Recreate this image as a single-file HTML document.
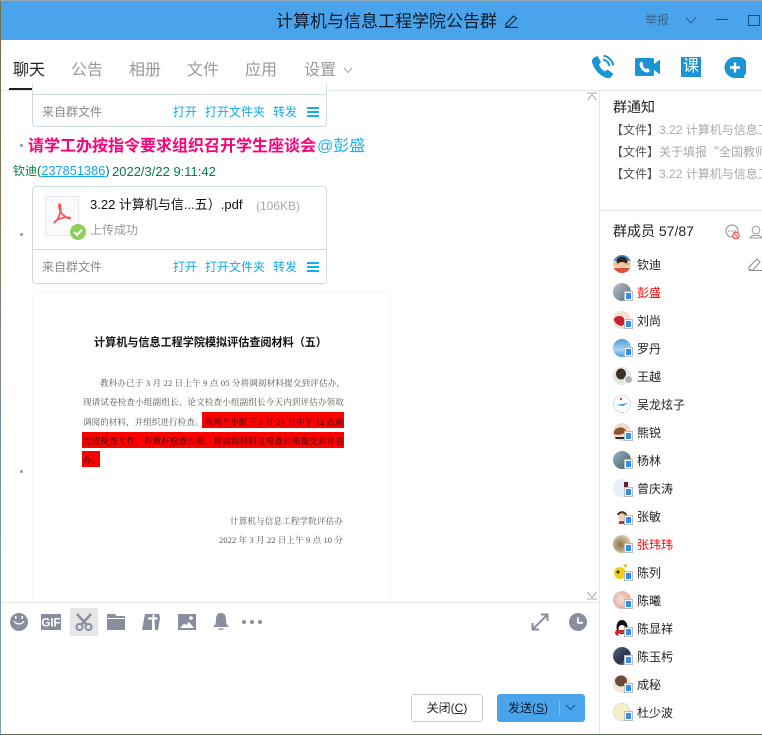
<!DOCTYPE html>
<html lang="zh"><head><meta charset="utf-8"><title>计算机与信息工程学院公告群</title>
<style>
html,body{margin:0;padding:0}
body{width:762px;height:735px;position:relative;overflow:hidden;background:#fff;font-family:"Liberation Sans","Noto Sans CJK SC",sans-serif;color:#222}
.t{position:absolute;white-space:nowrap;line-height:1}
.a{position:absolute}
.tab{font-size:16px;color:#999;top:63px}
.link{font-size:12px;color:#12a8ee}
.card{position:absolute;left:32px;width:293px;border:1px solid #cddbe5;border-radius:4px;background:#fff}
.menu{position:absolute;left:307px;width:12px;height:10px;box-sizing:border-box;border-top:2px solid #12aef0;border-bottom:2px solid #12aef0}
.menu:after{content:"";position:absolute;left:0;right:0;top:2px;height:2px;background:#12aef0}
.dot{position:absolute;left:20px;width:3px;height:3px;border-radius:50%;background:#8c9aa8}
.doc{position:absolute;font-family:"Liberation Serif","Noto Serif CJK SC",serif;font-size:8.5px;color:#555;left:83px;width:261px;line-height:12px;height:12px;text-align:justify;text-align-last:justify;white-space:nowrap;letter-spacing:.1px;filter:blur(.25px)}
.red{position:absolute;background:#fe0000}
.note{position:absolute;left:611px;width:151px;overflow:hidden;white-space:nowrap;font-size:12px;line-height:14px;color:#aaa}
.note b{font-weight:400;color:#555}
.name{position:absolute;left:637px;font-size:12px;line-height:14px;color:#222;white-space:nowrap}
.av{position:absolute;left:613px;width:18px;height:18px;border-radius:50%;overflow:hidden}
.ph{position:absolute;left:625px;width:5px;height:6px;background:#2d8ff0;border:1px solid #fff;outline:1px solid #bbb;outline-offset:0}
</style></head>
<body>
<!-- desktop edges -->
<div class="a" style="left:0;top:0;width:1px;height:735px;background:linear-gradient(#6f6a45,#8a7a50 30%,#6f8fa8 60%,#7fa0b8)"></div>
<div class="a" style="left:0;top:734px;width:762px;height:1px;background:#5f6f55"></div>
<div class="a" style="left:0;top:0;width:762px;height:1px;background:#8fa6b5"></div>
<!-- title bar -->
<div class="a" style="left:1px;top:1px;width:761px;height:39px;background:#4aa4ec"></div>
<div class="t" style="left:276px;top:13px;font-size:17px;color:#0b1a28">计算机与信息工程学院公告群</div>
<svg class="a" style="left:504px;top:14px" width="15" height="14" viewBox="0 0 15 14" fill="none" stroke="#12283a" stroke-width="1.1"><path d="M2 10 L9.5 2 L12.5 4.5 L5 12 L1.8 12.5 Z M1 13.4 H14"/></svg>
<div class="t" style="left:645px;top:14px;font-size:12px;color:#336791">举报</div>
<svg class="a" style="left:685px;top:16px" width="12" height="9" fill="none" stroke="#2f628c"><path d="M1 1.5 L6 7 L11 1.5"/></svg>
<div class="a" style="left:716px;top:19px;width:12px;height:1px;background:#1f4f78"></div>
<div class="a" style="left:748px;top:15px;width:10px;height:9px;border:1px solid #1f4f78"></div>
<!-- tabs -->
<div class="t tab" style="left:13px;color:#222">聊天</div>
<div class="t tab" style="left:71px">公告</div>
<div class="t tab" style="left:129px">相册</div>
<div class="t tab" style="left:187px">文件</div>
<div class="t tab" style="left:245px">应用</div>
<div class="t tab" style="left:304px">设置</div>
<svg class="a" style="left:343px;top:67px" width="10" height="7" fill="none" stroke="#aaa"><path d="M1 1 L5 5.5 L9 1"/></svg>
<div class="a" style="left:9px;top:88px;width:41px;height:2px;background:#222"></div>
<div class="a" style="left:1px;top:90px;width:761px;height:1px;background:#e5e8ea"></div>
<!-- top right icons -->
<svg class="a" style="left:591px;top:55px" width="24" height="24" viewBox="0 0 24 24"><path d="M3 2.5 L6.5 1 L10 7 L8 9.5 C9 12.5 11 15 14 16.5 L16.5 14.5 L22.5 19 L20 22 C19 23.5 16.500 23.500 14 22.500 C7 19.500 2 12 1 7 C.8 5 1.500 3.500 3 2.500Z" fill="#1a94d4"/><path d="M12 4.500C15 5 18 7.500 18.500 11M12.500 .8C17.500 1.500 21.500 5.500 22.300 10.500" fill="none" stroke="#1a94d4" stroke-width="2"/></svg>
<svg class="a" style="left:635px;top:58px" width="25" height="18" viewBox="0 0 25 18"><rect x="0" y="0" width="19" height="18" rx="1.500" fill="#1a94d4"/><path d="M19 6 L25 1.500 V16.500 L19 12Z" fill="#1a94d4"/><path d="M6 3.500 L8 5 L8 8 C8.500 9.500 9.500 10.500 11 11 L13 10 L15 13 L13 14.500 C9 15 5 10.500 4.500 6 Z" fill="#fff"/></svg>
<div class="a" style="left:681px;top:57px;width:20px;height:20px;background:#1a94d4;color:#fff;font-size:16px;line-height:20px;text-align:center">课</div>
<svg class="a" style="left:724px;top:57px" width="22" height="22" viewBox="0 0 22 22"><path d="M11 0A10.500 10.500 0 1 0 11 21H20.500L20 18.500A10.500 10.500 0 0 0 11 0Z" fill="#1a94d4"/><path d="M11 5.500V15.500M6 10.500H16" stroke="#fff" stroke-width="2.400"/></svg>
<!-- chat: first card -->
<div class="card" style="top:84px;height:42px;border-top:0;border-radius:0 0 4px 4px"></div>
<div class="a" style="left:33px;top:94px;width:293px;height:1px;background:#cddbe5"></div>
<div class="t" style="left:42px;top:106px;font-size:12px;color:#888">来自群文件</div>
<div class="t link" style="left:173px;top:106px">打开</div>
<div class="t link" style="left:205px;top:106px">打开文件夹</div>
<div class="t link" style="left:273px;top:106px">转发</div>
<div class="menu" style="top:107px"></div>
<!-- message -->
<div class="dot" style="top:144px"></div>
<div class="t" style="left:28px;top:139px;font-size:16px;font-weight:700;color:#ff0078">请学工办按指令要求组织召开学生座谈会</div>
<div class="t" style="left:317px;top:139px;font-size:16px;color:#1cb0f0">@彭盛</div>
<div class="t" style="left:13px;top:165px;font-size:12px;color:#008040">钦迪</div>
<div class="t" style="left:37px;top:165px;font-size:12.800px;color:#008040">(<span style="color:#12a8ee;text-decoration:underline">237851386</span>)</div>
<div class="t" style="left:112px;top:165px;font-size:13px;color:#008040">2022/3/22 9:11:42</div>
<!-- second card -->
<div class="card" style="top:186px;height:96px"></div>
<div class="a" style="left:33px;top:249px;width:293px;height:1px;background:#cddbe5"></div>
<div class="a" style="left:45px;top:196px;width:32px;height:38px;background:#fafafa;border:1px solid #e8e8e8"></div>
<svg class="a" style="left:52px;top:203px" width="20" height="24" viewBox="0 0 20 24" fill="none" stroke="#f45a5a" stroke-width="1.800"><path d="M2 20 C6 17 9 11 8.500 2.500 C8 0 6.500 1 7 4 C8 10 13 15 18 15.500 C19 14.500 14 13.500 10 15 C7 16 3 18 2 20Z"/></svg>
<div class="a" style="left:70px;top:224px;width:16px;height:16px;border-radius:50%;background:#8ccf5c"></div>
<svg class="a" style="left:70px;top:224px" width="16" height="16" fill="none" stroke="#fff" stroke-width="2"><path d="M4 8 L7 11 L12 5.500"/></svg>
<div class="t" style="left:90px;top:198px;font-size:13px;color:#111">3.22 计算机与信...五）.pdf</div>
<div class="t" style="left:256px;top:200px;font-size:12px;color:#aaa">(106KB)</div>
<div class="t" style="left:90px;top:224px;font-size:12px;color:#999">上传成功</div>
<div class="t" style="left:42px;top:261px;font-size:12px;color:#888">来自群文件</div>
<div class="t link" style="left:173px;top:261px">打开</div>
<div class="t link" style="left:205px;top:261px">打开文件夹</div>
<div class="t link" style="left:273px;top:261px">转发</div>
<div class="menu" style="top:262px"></div>
<div class="dot" style="top:233px"></div>
<!-- image -->
<div class="a" style="left:32px;top:292px;width:357px;height:310px;border:1px solid #f6f6f6;border-bottom:0;border-radius:4px 4px 0 0;box-sizing:border-box;width:359px"></div>
<div class="dot" style="top:470px"></div>
<div class="red" style="left:202px;top:412px;width:142px;height:16px"></div>
<div class="red" style="left:82px;top:432px;width:262px;height:16px"></div>
<div class="red" style="left:82px;top:451px;width:18px;height:16px"></div>
<div class="t" style="left:94px;top:338px;font-size:11.100px;font-weight:700;color:#111;font-family:'Liberation Sans','Noto Sans CJK SC',sans-serif">计算机与信息工程学院模拟评估查阅材料（五）</div>
<div class="doc" style="top:377px;left:100px;width:245px">教科办已于 3 月 22 日上午 9 点 05 分将调阅材料提交到评估办，</div>
<div class="doc" style="top:396px">现请试卷检查小组副组长、论文检查小组副组长今天内到评估办领取</div>
<div class="doc" style="top:416px;width:115px">调阅的材料，并组织进行检查。</div>
<div class="doc" style="top:416px;left:204px;width:140px;color:#200">请两个小组于 3 月 24 日中午 12 点前</div>
<div class="doc" style="top:435px;color:#200">完成检查工作，并做好检查台账，将调阅材料及检查台账提交到评估</div>
<div class="doc" style="top:454px;width:16px;color:#200;text-align-last:left;letter-spacing:0">办。</div>
<div class="doc" style="top:515px;left:230px;width:113px">计算机与信息工程学院评估办</div>
<div class="doc" style="top:534px;left:219px;width:124px">2022 年 3 月 22 日上午 9 点 10 分</div>
<!-- scroll arrows -->
<svg class="a" style="left:586px;top:92px" width="12" height="9" fill="none" stroke="#aaa"><path d="M1 1H11M1.500 8 L6 2.500 L10.500 8"/></svg>
<svg class="a" style="left:586px;top:591px" width="12" height="9" fill="none" stroke="#aaa"><path d="M1 8H11M1.500 1 L6 6.500 L10.500 1"/></svg>
<!-- input area -->
<div class="a" style="left:1px;top:602px;width:598px;height:1px;background:#e5e8ea"></div>
<div class="a" style="left:70px;top:608px;width:28px;height:28px;background:#e6e6e6;border-radius:2px"></div>
<svg class="a" style="left:0;top:605px" width="270" height="34" fill="#8a8d9e">
<circle cx="19" cy="17" r="9"/><path d="M14 16a5.500 5 0 0 0 10 0" fill="none" stroke="#fff" stroke-width="1.300"/><rect x="15" y="11" width="1.500" height="3" fill="#fff"/><rect x="21.500" y="11" width="1.500" height="3" fill="#fff"/>
<rect x="41" y="9" width="20" height="16"/><text x="51" y="21.500" font-family="Liberation Sans" font-weight="700" font-size="11.500" fill="#fff" text-anchor="middle">GIF</text>
<path d="M77 9 L87 20 M91 9 L81 20" stroke="#8a8d9e" stroke-width="2.500" fill="none"/><circle cx="79.500" cy="22" r="3" fill="none" stroke="#8a8d9e" stroke-width="2"/><circle cx="88.500" cy="22" r="3" fill="none" stroke="#8a8d9e" stroke-width="2"/>
<path d="M107 9H115L116.500 11H125V13H107ZM107 14H125V25H107Z"/>
<path d="M145 9H159L160 13L158 25H142L144 14Z"/><path d="M152.500 9.500H154.500V12.500H157.500V14.500H154.500L155 25H152L152 14.500H148V12.500H152.500Z" fill="#fff"/>
<path d="M178 9H196V25H178ZM180 23H194L189 17L186 20L184 18.500Z" fill-rule="evenodd"/><circle cx="191" cy="13" r="1.800" fill="#fff"/>
<path d="M221 8C225 8 226 11 226 15C226 19 227 20 229 22H213C215 20 216 19 216 15C216 11 217 8 221 8ZM218 23.500H224C223.500 25.500 218.500 25.500 218 23.500Z"/>
<circle cx="244" cy="17" r="2"/><circle cx="252" cy="17" r="2"/><circle cx="260" cy="17" r="2"/>
</svg>
<svg class="a" style="left:530px;top:612px" width="20" height="20" fill="none" stroke="#8a8d9e" stroke-width="2"><path d="M3 17 L17 3M11 2.500H17.500V9M2.500 11V17.500H9"/></svg>
<svg class="a" style="left:569px;top:613px" width="18" height="18"><circle cx="9" cy="9" r="9" fill="#8a8d9e"/><path d="M9 4.500V9.800H14" fill="none" stroke="#fff" stroke-width="1.800"/></svg>
<!-- buttons -->
<div class="a" style="left:411px;top:694px;width:70px;height:26px;border:1px solid #ccc;border-radius:3px;font-size:12px;line-height:26px;text-align:center;color:#222">关闭(<u>C</u>)</div>
<div class="a" style="left:497px;top:694px;width:88px;height:28px;background:#4aa4ec;border-radius:3px"></div>
<div class="t" style="left:508px;top:702px;font-size:12px;color:#0b1a28">发送(<u>S</u>)</div>
<div class="a" style="left:559px;top:700px;width:1px;height:16px;background:#7cbdf0"></div>
<svg class="a" style="left:565px;top:704px" width="11" height="8" fill="none" stroke="#1f4f78"><path d="M1 1 L5.500 5.500 L10 1"/></svg>
<!-- sidebar -->
<div class="a" style="left:599px;top:90px;width:1px;height:644px;background:#e5e8ea"></div>
<div class="t" style="left:613px;top:100px;font-size:14px;color:#222">群通知</div>
<div class="note" style="top:123px"><b>【文件】</b>3.22 计算机与信息工程学院</div>
<div class="note" style="top:145px"><b>【文件】</b>关于填报<span style="font-family:'Noto Sans CJK SC',sans-serif">“</span>全国教师管理</div>
<div class="note" style="top:167px"><b>【文件】</b>3.22 计算机与信息工程学院</div>
<div class="a" style="left:600px;top:210px;width:162px;height:1px;background:#e5e8ea"></div>
<div class="t" style="left:613px;top:224px;font-size:14px;color:#222">群成员 57/87</div>
<svg class="a" style="left:724px;top:224px" width="38" height="17" fill="none"><circle cx="8" cy="7" r="6" stroke="#888"/><circle cx="5" cy="7" r=".8" fill="#888"/><circle cx="8" cy="7" r=".8" fill="#888"/><circle cx="11" cy="7" r=".8" fill="#888"/><circle cx="12" cy="11.500" r="3.200" fill="#fff" stroke="#f55" stroke-width="1.300"/><path d="M10 9.500L14 13.500" stroke="#f55"/><circle cx="32" cy="6" r="3.800" stroke="#999"/><path d="M26 14C27 10.500 37 10.500 38 14Z" stroke="#999"/></svg>
<svg class="a" style="left:748px;top:257px" width="14" height="15" fill="none" stroke="#888"><path d="M1 10 L9 2 L12 5 L5 13 H1Z M1 13.500H14"/></svg>

<div class="av" style="top:255px;background:#f8d8b8"><svg width="18" height="18"><rect width="18" height="6" fill="#3a8fd0"/><rect y="13" width="18" height="5" fill="#d85040"/><circle cx="9" cy="7" r="5.500" fill="#3a2418"/><ellipse cx="9" cy="10" rx="4.500" ry="3" fill="#f0c8a0"/><circle cx="3" cy="9" r="1.800" fill="#e8b888"/><circle cx="15" cy="9" r="1.800" fill="#e8b888"/></svg></div>
<div class="name" style="top:258px">钦迪</div>

<div class="av" style="top:283px;background:linear-gradient(135deg,#b8c0c8,#5f6f7f)"></div><div class="ph" style="top:292px"></div>
<div class="name" style="top:286px;color:#f00">彭盛</div>

<div class="av" style="top:311px;background:#f3e0cc"><svg width="18" height="18"><path d="M1 8C3 4 10 4 11 8C14 9 12 14 8 15C5 14 1 12 1 8Z" fill="#c8202c"/></svg></div><div class="ph" style="top:320px"></div>
<div class="name" style="top:314px">刘尚</div>

<div class="av" style="top:339px;background:linear-gradient(#4a9be0,#a8d4f0 60%,#4a9be0)"></div><div class="ph" style="top:348px"></div>
<div class="name" style="top:342px">罗丹</div>

<div class="av" style="top:367px;background:#e4e6e2"><svg width="18" height="18"><ellipse cx="8" cy="7" rx="5" ry="5.500" fill="#3a3028"/></svg></div><div class="a" style="left:624px;top:375px;width:7px;height:7px;border-radius:50%;background:#b5b5b5;border:1px solid #fff"></div>
<div class="name" style="top:370px">王越</div>

<div class="av" style="top:395px;background:#fff;border:1px dotted #8fc8d8;box-sizing:border-box"><svg width="16" height="16"><path d="M2 9L14 7L9 10Z" fill="#2aa0e0"/><circle cx="7" cy="3" r="1.200" fill="#d04040"/></svg></div>
<div class="name" style="top:398px">吴龙炫子</div>

<div class="av" style="top:423px;background:#ecdccc"><svg width="18" height="18"><path d="M1 9C3 3 11 3 13 8C12 11 6 13 1 11Z" fill="#94502c"/><path d="M2 14H14V16H2Z" fill="#2a2a2a"/></svg></div><div class="ph" style="top:432px"></div>
<div class="name" style="top:426px">熊锐</div>

<div class="av" style="top:451px;background:linear-gradient(135deg,#8ab8dc,#6a7f80 60%,#44607c)"></div><div class="ph" style="top:460px"></div>
<div class="name" style="top:454px">杨林</div>

<div class="av" style="top:479px;background:#e6f0fa"><svg width="18" height="18"><rect x="11" y="3" width="4" height="10" fill="#6a1830"/></svg></div><div class="ph" style="top:488px"></div>
<div class="name" style="top:482px">曾庆涛</div>

<div class="av" style="top:507px;background:#fff"><svg width="18" height="18"><path d="M4 8C5 3 13 3 14 8Z" fill="#4a3028"/><circle cx="9" cy="10" r="3.800" fill="#f4cdb0"/><path d="M6 14H12V17H6Z" fill="#c83030"/></svg></div><div class="ph" style="top:516px"></div>
<div class="name" style="top:510px">张敏</div>

<div class="av" style="top:535px;background:radial-gradient(circle at 40% 55%,#8a7044,#d8ccaa 70%,#b8a880)"></div><div class="ph" style="top:544px"></div>
<div class="name" style="top:538px;color:#f00">张玮玮</div>

<div class="av" style="top:563px;background:#fff"><svg width="18" height="18"><circle cx="7" cy="10" r="6" fill="#f0d010"/><circle cx="5" cy="9" r="1.500" fill="#222"/><path d="M10 2L14 1L13 5Z" fill="#e0b000"/></svg></div><div class="ph" style="top:572px"></div>
<div class="name" style="top:566px">陈列</div>

<div class="av" style="top:591px;background:radial-gradient(circle at 45% 45%,#f4e0d0,#d89a90)"></div><div class="ph" style="top:600px"></div>
<div class="name" style="top:594px">陈曦</div>

<div class="av" style="top:619px;background:#fff"><svg width="18" height="18"><ellipse cx="9" cy="8" rx="5.500" ry="7" fill="#111"/><ellipse cx="9" cy="10" rx="3.500" ry="4" fill="#fff"/><path d="M3 11H14V13L6 14L5 17L1 16Z" fill="#e02020"/></svg></div><div class="ph" style="top:628px"></div>
<div class="name" style="top:622px">陈显祥</div>

<div class="av" style="top:647px;background:linear-gradient(135deg,#5a6a8a,#2a2f48 60%,#9aa8b8)"></div><div class="ph" style="top:656px"></div>
<div class="name" style="top:650px">陈玉杇</div>

<div class="av" style="top:675px;background:#f2e6d6"><svg width="18" height="18"><ellipse cx="8" cy="6" rx="6" ry="5.500" fill="#6e4a3a"/></svg></div><div class="ph" style="top:684px"></div>
<div class="name" style="top:678px">成秘</div>

<div class="av" style="top:703px;background:#f6f0c8;border:1px solid #ddd;box-sizing:border-box"></div><div class="ph" style="top:712px"></div>
<div class="name" style="top:706px">杜少波</div>
</body></html>
